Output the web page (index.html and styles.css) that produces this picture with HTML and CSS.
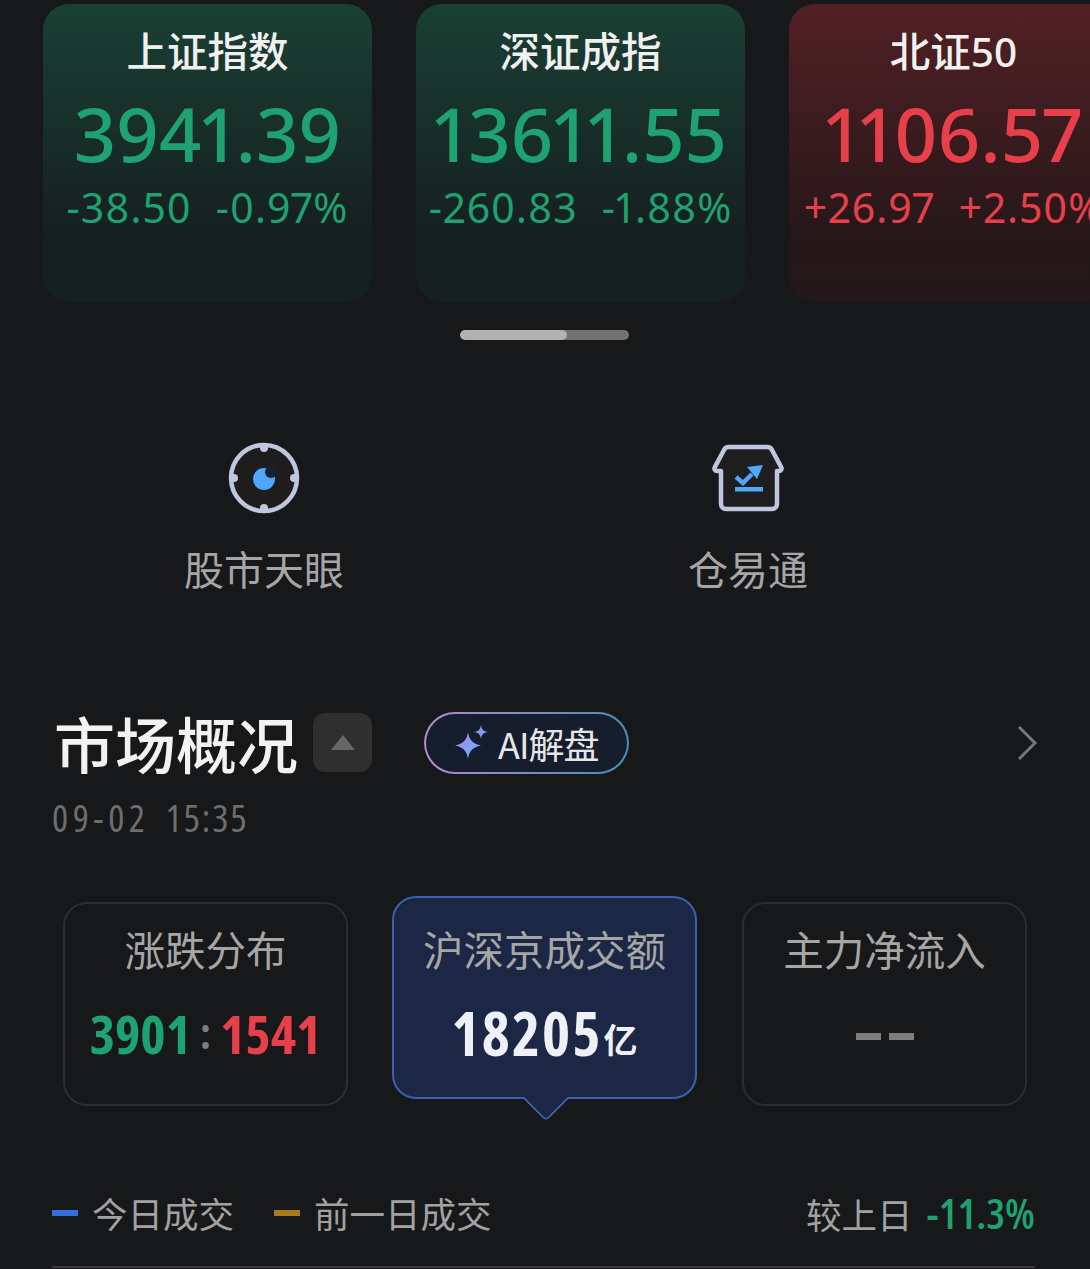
FILE: index.html
```html
<!DOCTYPE html>
<html lang="zh-CN">
<head>
<meta charset="utf-8">
<title>市场概况</title>
<link rel="stylesheet" href="styles.css">
</head>
<body>
<main class="page">
  <section class="indices">
    <article class="index-card down">
      <h2 class="index-name">上证指数</h2>
      <div class="index-value">3941.39</div>
      <div class="index-change"><span>-38.50</span><span>-0.97%</span></div>
    </article>
    <article class="index-card down">
      <h2 class="index-name">深证成指</h2>
      <div class="index-value">13611.55</div>
      <div class="index-change"><span>-260.83</span><span>-1.88%</span></div>
    </article>
    <article class="index-card up">
      <h2 class="index-name">北证50</h2>
      <div class="index-value">1106.57</div>
      <div class="index-change"><span>+26.97</span><span>+2.50%</span></div>
    </article>
  </section>

  <div class="scrollbar"><div class="scrollbar-thumb"></div></div>

  <nav class="shortcuts">
    <a class="shortcut">
      <svg class="shortcut-icon" width="74" height="74" viewBox="0 0 74 74">
        <circle cx="37" cy="37" r="33" fill="#1e1d1d" stroke="#bfc7e0" stroke-width="4.500"/>
        <circle cx="37" cy="7" r="4" fill="#bfc7e0"/>
        <circle cx="37" cy="67" r="4" fill="#bfc7e0"/>
        <circle cx="7" cy="37" r="4" fill="#bfc7e0"/>
        <circle cx="67" cy="37" r="4" fill="#bfc7e0"/>
        <circle cx="37" cy="38" r="11" fill="#4ea7fb"/>
        <circle cx="44" cy="31" r="6" fill="#16222f"/>
      </svg>
      <span class="shortcut-label">股市天眼</span>
    </a>
    <a class="shortcut">
      <svg class="shortcut-icon" width="74" height="74" viewBox="0 -3 74 74">
        <path d="M10 27H6a2.5 2.5 0 0 1-2.3-3.6L13 6a5 5 0 0 1 4-3H57a5 5 0 0 1 4 3l9.300 17.400A2.500 2.500 0 0 1 68 27H66V60a5 5 0 0 1-5 5H15a5 5 0 0 1-5-5Z" fill="#1e1e1f" stroke="#bfc7e0" stroke-width="4.500" stroke-linejoin="round"/>
        <path d="M25 33l7 6 9-9" fill="none" stroke="#4ea7fb" stroke-width="4.500"/>
        <path d="M36 23l16-2-6 14Z" fill="#4ea7fb"/>
        <rect x="24" y="43" width="28" height="4.500" fill="#4ea7fb"/>
      </svg>
      <span class="shortcut-label">仓易通</span>
    </a>
  </nav>

  <header class="section-head">
    <h1 class="section-title">市场概况</h1>
    <button class="collapse"><span class="collapse-arrow"></span></button>
    <div class="ai-pill">
      <svg width="36" height="36" viewBox="0 0 36 36">
        <defs>
          <linearGradient id="spark" x1="0" y1="0" x2="1" y2="1">
            <stop offset="0" stop-color="#b57cf5"/>
            <stop offset="1" stop-color="#56c0f5"/>
          </linearGradient>
        </defs>
        <path d="M15 7c1.200 8 4.500 11.500 13 13.500-8.500 2-11.800 5.500-13 13.500-1.200-8-4.500-11.500-13-13.500 8.500-2 11.800-5.500 13-13.500Z" fill="url(#spark)"/>
        <path d="M28 0c.7 4.500 2.500 6.300 7 7-4.500.7-6.300 2.500-7 7-.7-4.500-2.500-6.300-7-7 4.500-.7 6.300-2.500 7-7Z" fill="#7f9bf0"/>
      </svg>
      <span class="ai-text">AI解盘</span>
    </div>
    <svg class="chevron" width="22" height="36" viewBox="0 0 22 36">
      <path d="M3 2l16 16L3 34" fill="none" stroke="#77787a" stroke-width="3"/>
    </svg>
  </header>
  <div class="timestamp"><span class="date">09-02</span><span class="time">15:35</span></div>

  <section class="tabs">
    <div class="tab">
      <div class="tab-title">涨跌分布</div>
      <div class="tab-value ratio"><span class="green">3901</span><span class="colon">:</span><span class="red">1541</span></div>
    </div>
    <div class="tab selected">
      <div class="tab-title">沪深京成交额</div>
      <div class="tab-value total">18205<span class="unit">亿</span></div>
    </div>
    <div class="tab">
      <div class="tab-title">主力净流入</div>
      <div class="tab-value empty"><i></i><i></i></div>
    </div>
  </section>

  <footer class="legend">
    <span class="swatch blue"></span><span class="legend-text">今日成交</span>
    <span class="swatch amber"></span><span class="legend-text">前一日成交</span>
    <span class="compare">较上日 <b>-11.3%</b></span>
  </footer>
  <div class="rule"></div>
</main>
</body>
</html>
```

FILE: styles.css
```css
* { box-sizing: border-box; }
html, body { margin: 0; padding: 0; background: #17181a; }
body { font-family: "Noto Sans", "Noto Sans CJK SC", sans-serif; }
.page { width: 1090px; height: 1269px; overflow: hidden; background: #17181a; display: flex; flex-direction: column; }

.indices { display: flex; gap: 44px; padding: 4px 0 0 43px; flex: none; }
.index-card { flex: none; width: 329px; height: 298px; border-radius: 26px; display: flex; flex-direction: column; align-items: center; padding-top: 20px; }
.index-card.down { background: linear-gradient(180deg, #1a4034 0%, #161f20 78%, #152020 100%); color: #1fa271; }
.index-card.up { background: linear-gradient(180deg, #522025 0%, #251719 80%, #24171a 100%); color: #e8404a; }
.index-name { margin: 0; font-size: 40.500px; line-height: 56px; font-weight: 500; color: #f0f0f0; font-family: "Noto Sans", "Noto Sans CJK SC", sans-serif; }
.index-value { font-size: 74px; font-weight: 500; line-height: 82px; margin-top: 13px; white-space: nowrap; font-variant-numeric: proportional-nums; }
.index-change { display: flex; gap: 24px; font-size: 41px; line-height: 56px; margin-top: 4px; white-space: nowrap; letter-spacing: 1px; font-variant-numeric: proportional-nums; }

.scrollbar { width: 169px; height: 10px; border-radius: 5px; background: #737373; margin: 28px 0 0 460px; flex: none; overflow: hidden; }
.scrollbar-thumb { width: 107px; height: 10px; border-radius: 5px; background: #b2b2b2; }

.shortcuts { display: grid; grid-template-columns: 484px 484px; padding-left: 22px; margin-top: 101px; flex: none; }
.shortcut { display: flex; flex-direction: column; align-items: center; }
.shortcut-icon { display: block; }
.shortcut-label { font-size: 40px; line-height: 56px; margin-top: 25px; color: #a6a6a6; font-weight: 400; font-family: "Noto Sans CJK SC", sans-serif; }

.section-head { display: flex; align-items: center; height: 62px; margin-top: 116px; padding-left: 54px; flex: none; position: relative; }
.section-title { margin: 0; font-size: 61px; line-height: 62px; font-weight: 500; color: #f2f2f2; font-family: "Noto Sans CJK SC", sans-serif; }
.collapse { width: 59px; height: 59px; margin-left: 15px; margin-top: -1px; padding: 0; border: 0; border-radius: 12px; background: #2f2f2f; display: flex; align-items: center; justify-content: center; }
.collapse-arrow { width: 0; height: 0; border-left: 12px solid transparent; border-right: 12px solid transparent; border-bottom: 15px solid #666; }
.ai-pill { width: 205px; height: 62px; margin-left: 52px; border: 2px solid transparent; border-radius: 31px; background: linear-gradient(#161d2c, #161d2c) padding-box, linear-gradient(90deg, #b48ad0, #4b8db5) border-box; display: flex; align-items: center; padding-left: 27px; }
.ai-text { font-size: 36px; line-height: 44px; margin-left: 9px; color: #e6e6e6; font-family: "Noto Sans CJK SC", sans-serif; letter-spacing: -1px; }
.chevron { margin-left: auto; margin-right: 52px; }
.timestamp { display: flex; gap: 16px; margin: 21px 0 0 52px; height: 44px; font-family: "Open Sans", "Noto Sans", sans-serif; font-stretch: 75%; font-size: 38px; line-height: 44px; color: #6e6e6e; flex: none; }
.date { letter-spacing: 4.500px; }
.time { letter-spacing: 2px; }

.tabs { display: flex; align-items: flex-start; padding-left: 63px; margin-top: 63px; flex: none; }
.tab { width: 285px; height: 204px; border: 2px solid #2d2e30; border-radius: 24px; display: flex; flex-direction: column; align-items: center; padding-top: 17px; flex: none; }
.tab-title { font-size: 40.500px; line-height: 56px; color: #a6a6a6; font-family: "Noto Sans CJK SC", sans-serif; white-space: nowrap; }
.tab-value { height: 60px; margin-top: 26px; display: flex; align-items: center; font-family: "Open Sans", "Noto Sans", sans-serif; font-stretch: 75%; font-weight: 700; font-size: 54px; line-height: 60px; white-space: nowrap; }
.tab.selected { width: 305px; height: 203px; margin: -6px 45px 0 44px; background: #1b2745; border-color: #3a62ad; position: relative; padding-top: 23px; }
.tab.selected::after { content: ""; position: absolute; left: 50%; bottom: -18px; width: 30px; height: 30px; margin-left: -15px; background: #1b2745; border-right: 2px solid #3a62ad; border-bottom: 2px solid #3a62ad; border-bottom-right-radius: 5px; transform: rotate(45deg); }
.green { color: #1fa271; }
.red { color: #e8404a; }
.colon { color: #7e7e7e; margin: 0 9px; font-size: 42px; }
.total { color: #eef0f6; font-size: 60px; letter-spacing: 2px; }
.unit { font-family: "Noto Sans CJK SC", sans-serif; font-size: 34px; font-weight: 700; letter-spacing: 0; margin-left: 1px; padding-top: 12px; }
.empty { gap: 8px; padding-top: 6px; }
.empty i { display: block; width: 25px; height: 7px; background: #7e7e7e; }

.legend { display: flex; align-items: center; height: 56px; margin: 79px 55px 0 52px; flex: none; color: #a2a2a2; font-size: 35.500px; font-family: "Noto Sans CJK SC", sans-serif; }
.swatch { width: 26px; height: 6px; flex: none; }
.swatch.blue { background: #356fdb; }
.swatch.amber { background: #a87a1e; margin-left: 40px; }
.legend-text { margin-left: 14px; line-height: 56px; }
.compare { margin-left: auto; line-height: 56px; }
.compare b { font-family: "Open Sans", "Noto Sans", sans-serif; font-stretch: 75%; font-weight: 600; font-size: 42px; color: #1fa271; margin-left: 6px; }
.rule { height: 2px; margin: 25px 55px 0 52px; background: #3a3a3c; flex: none; }
```
